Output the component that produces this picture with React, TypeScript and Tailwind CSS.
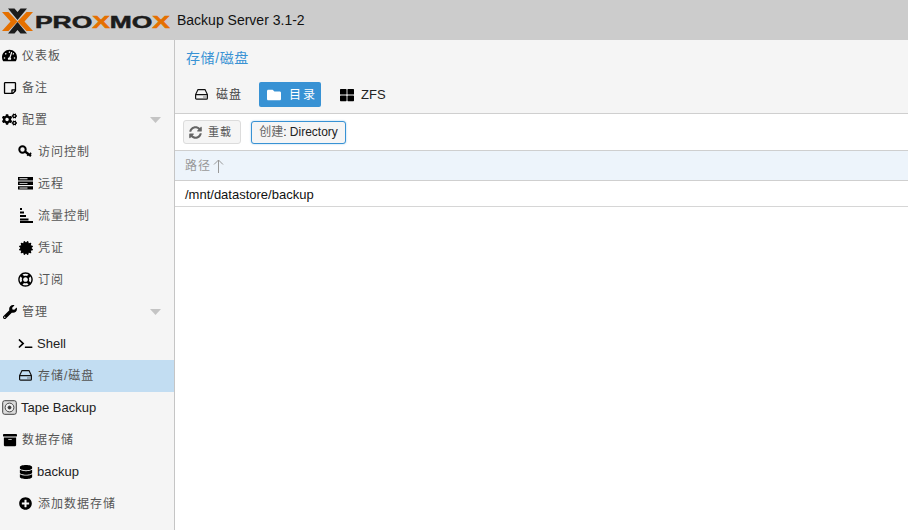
import type { ReactNode } from 'react';
import {
  FaArchive,
  FaCertificate,
  FaCogs,
  FaDatabase,
  FaFolder,
  FaPlusCircle,
  FaRegLifeRing,
  FaRegStickyNote,
  FaSyncAlt,
  FaTachometerAlt,
  FaTerminal,
  FaThLarge,
  FaWrench,
} from 'react-icons/fa';

const font = "font-['Liberation_Sans','Noto_Sans_CJK_SC',sans-serif]";

const HddIcon = ({ color = '#111' }: { color?: string }) => (
  <svg width="13" height="11" viewBox="0 0 13 11" fill="none" stroke={color} strokeWidth="1.200">
    <path d="M3 .6h7l2.400 5v3.600a1 1 0 0 1-1 1H1.600a1 1 0 0 1-1-1V5.600zM.6 5.600h11.800" />
    <path d="M8.500 8h1M10.500 8h.8" />
  </svg>
);

const KeyIcon = () => (
  <svg width="15" height="13" viewBox="0 0 15 13" fill="none" stroke="currentColor">
    <circle cx="4.500" cy="4.500" r="3.200" strokeWidth="2" />
    <path d="M7 6.500l6 4.500" strokeWidth="2.200" />
    <path d="M10.500 9l-1.200 1.800M13 7.800l-1.200 1.800" strokeWidth="1.600" />
  </svg>
);

const ServerIcon = () => (
  <svg width="15" height="13" viewBox="0 0 15 13" fill="currentColor">
    <path d="M0 0h15v3.400H0zM0 4.600h15V8H0zM0 9.200h15v3.400H0z" />
    <path d="M1.500 1.300h8v.9h-8zM1.500 5.900h8v.9h-8zM1.500 10.500h8v.9h-8z" fill="#f5f5f5" />
  </svg>
);

const TrafficIcon = () => (
  <svg width="14" height="15" viewBox="0 0 14 15" fill="currentColor">
    <path d="M1 0h2v2H1zM1 3.500h4v2H1zM1 7h6v2H1zM1 10.500h8.500v2H1zM1 13h13v2H1z" />
  </svg>
);

const TapeIcon = () => (
  <svg width="15" height="15" viewBox="0 0 15 15" fill="none" stroke="#444">
    <rect x="0.700" y="0.700" width="13.600" height="13.600" rx="2" fill="#dcdcdc" />
    <circle cx="7.500" cy="7.500" r="4.400" fill="#f2f2f2" />
    <circle cx="7.500" cy="7.500" r="1.500" fill="#333" />
  </svg>
);

const Caret = () => (
  <svg className="ml-auto mr-[13px]" width="11" height="6" viewBox="0 0 11 6" fill="#c4c4c4">
    <path d="M0 0h11L5.500 6z" />
  </svg>
);

type Item = { label: string; icon: ReactNode; sub?: boolean; caret?: boolean; active?: boolean; latin?: boolean };

const items: Item[] = [
  { label: '仪表板', icon: <FaTachometerAlt size={15} /> },
  { label: '备注', icon: <FaRegStickyNote size={14} /> },
  { label: '配置', icon: <FaCogs size={17} />, caret: true },
  { label: '访问控制', icon: <KeyIcon />, sub: true },
  { label: '远程', icon: <ServerIcon />, sub: true },
  { label: '流量控制', icon: <TrafficIcon />, sub: true },
  { label: '凭证', icon: <FaCertificate size={14} />, sub: true },
  { label: '订阅', icon: <FaRegLifeRing size={15} />, sub: true },
  { label: '管理', icon: <FaWrench size={14} />, caret: true },
  { label: 'Shell', icon: <FaTerminal size={13} className="scale-x-110" />, sub: true, latin: true },
  { label: '存储/磁盘', icon: <HddIcon />, sub: true, active: true },
  { label: 'Tape Backup', icon: <TapeIcon />, latin: true },
  { label: '数据存储', icon: <FaArchive size={14} /> },
  { label: 'backup', icon: <FaDatabase size={14} />, sub: true, latin: true },
  { label: '添加数据存储', icon: <FaPlusCircle size={13} />, sub: true },
];

const SideRow = ({ item }: { item: Item }) => (
  <div className={`flex h-8 items-center ${item.sub ? 'pl-[18px]' : 'pl-[2px]'} ${item.active ? 'bg-[#c2ddf2]' : ''}`}>
    <span className="flex w-[15px] shrink-0 items-center justify-center pb-px text-black">{item.icon}</span>
    <span
      className={`leading-none ${
        item.latin ? 'ml-[4px] pb-[2px] text-[13px] text-[#222]' : 'ml-[5px] text-xs tracking-[1px] text-[#555]'
      }`}
    >
      {item.label}
    </span>
    {item.caret && <Caret />}
  </div>
);

const Logo = () => (
  <svg width="170" height="36" viewBox="0 0 170 36" className="shrink-0">
    {/* black chevrons */}
    <path d="M8 6.500h6.500l3 3.500 3-3.500H27L17.500 18zM8 31.500h6.500l3-3.500 3 3.500H27L17.500 20z" fill="#1c1c1c" />
    {/* orange chevrons */}
    <path d="M2 10h6.500l9 9.500-9 9.500H2l8.500-9.500zM33 10h-6.500l-9 9.500 9 9.500H33l-8.500-9.500z" fill="#e57000" />
    <text
      x="35"
      y="25.500"
      fontFamily="Liberation Sans, sans-serif"
      fontWeight="700"
      fontSize="17"
      fill="#1c1c1c"
      stroke="#1c1c1c"
      strokeWidth="0.500"
      textLength="135"
      lengthAdjust="spacingAndGlyphs"
    >
      PRO<tspan fill="#e57000" stroke="#e57000">X</tspan>MO<tspan fill="#e57000" stroke="#e57000">X</tspan>
    </text>
  </svg>
);

export default function App() {
  return (
    <div className={`${font} flex h-[530px] w-[908px] flex-col overflow-hidden bg-white text-[13px] text-black`}>
      {/* top bar */}
      <div className="flex h-10 shrink-0 items-center bg-[#cccccc]">
        <Logo />
        <span className="ml-[7px] text-sm text-[#111]">Backup Server 3.1-2</span>
      </div>

      <div className="flex min-h-0 flex-1">
        {/* nav tree */}
        <div className="w-[175px] shrink-0 border-r border-[#c5c5c5] bg-[#f5f5f5]">
          {items.map(item => (
            <SideRow key={item.label} item={item} />
          ))}
        </div>

        <div className="flex min-w-0 flex-1 flex-col">
          {/* title + tabs */}
          <div className="h-[74px] shrink-0 border-b border-[#cfcfcf] bg-[#f5f5f5]">
            <div className="flex h-9 items-center pl-[11px] text-sm tracking-[0.6px] text-[#3892d4]">存储/磁盘</div>
            <div className="mt-1.5 flex items-center pl-[9px]">
              <div className="flex h-[25px] w-[66px] items-center pl-[11px] text-xs tracking-[1px] text-[#444]">
                <HddIcon />
                <span className="ml-2">磁盘</span>
              </div>
              <div className="ml-[9px] flex h-[25px] w-[62px] items-center rounded-[2px] bg-[#3892d4] pl-[8px] text-xs tracking-[2px] text-white">
                <FaFolder size={14} />
                <span className="ml-2">目录</span>
              </div>
              <div className="ml-[19px] flex h-[25px] items-center text-[#222]">
                <FaThLarge size={14} className="text-black" />
                <span className="ml-[7px]">ZFS</span>
              </div>
            </div>
          </div>

          {/* toolbar */}
          <div className="flex h-[37px] shrink-0 items-center gap-[10px] border-b border-[#cfcfcf] pl-2">
            <button className="flex h-6 w-[58px] items-center rounded-[3px] border border-[#dcdcdc] bg-[#f5f5f5] pl-[5px] text-[11px] tracking-[1px] text-[#555]">
              <FaSyncAlt size={13} className="text-[#666]" />
              <span className="ml-[6px]">重载</span>
            </button>
            <button className="flex h-[23px] w-[95px] items-center justify-center rounded-[3px] border border-[#3892d4] bg-[#f5f5f5] text-xs text-[#222] shadow-[0_0_2px_#9cc9ea]">
              <span className="text-[#666]">创建</span>: Directory
            </button>
          </div>

          {/* grid */}
          <div className="flex h-[30px] shrink-0 items-center border-b border-[#cfcfcf] bg-[#edf4fb] pl-[10px] text-xs tracking-[1px] text-[#999]">
            路径
            <svg className="ml-[2px]" width="11" height="14" viewBox="0 0 11 14" fill="none" stroke="#999">
              <path d="M5.500 14V1M1 5.500l4.500-4.500 4.500 4.500" />
            </svg>
          </div>
          <div className="flex h-[26px] shrink-0 items-center border-b border-[#d6d6d6] pl-[10px] pt-[3px] text-[13px] text-[#111]">
            /mnt/datastore/backup
          </div>
        </div>
      </div>
    </div>
  );
}
